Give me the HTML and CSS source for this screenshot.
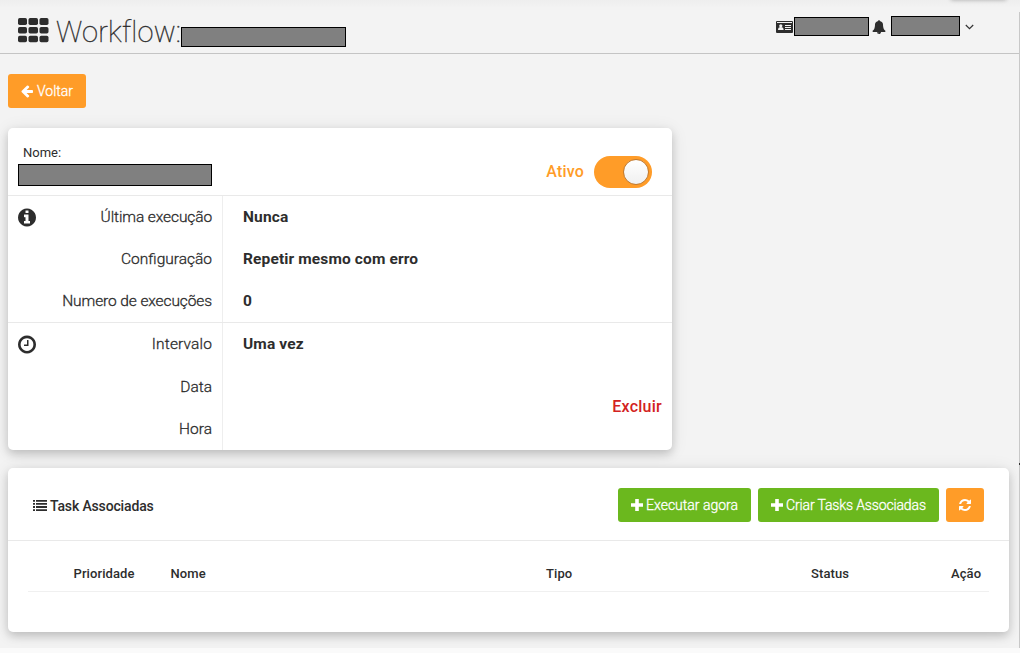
FILE: index.html
```html
<!DOCTYPE html>
<html lang="pt-BR">
<head>
<meta charset="utf-8">
<title>Workflow</title>
<link rel="stylesheet" href="styles.css">
</head>
<body>
<div class="page">
  <header class="topbar">
    <svg class="grid-icon" width="31" height="25" viewBox="0 0 31 25"><g fill="#2d2d2d"><rect y="0" width="9" height="7" rx="1.7"/><rect x="10.5" y="0" width="9.5" height="7" rx="1.7"/><rect x="21.5" y="0" width="9" height="7" rx="1.7"/><rect y="9" width="9" height="6.5" rx="1.7"/><rect x="10.5" y="9" width="9.5" height="6.5" rx="1.7"/><rect x="21.5" y="9" width="9" height="6.5" rx="1.7"/><rect y="17.7" width="9" height="6.5" rx="1.7"/><rect x="10.5" y="17.7" width="9.5" height="6.5" rx="1.7"/><rect x="21.5" y="17.7" width="9" height="6.5" rx="1.7"/></g></svg>
    <h1 class="title"><span class="title-text">Workflow:</span></h1>
    <span class="mask mask-title"></span>
    <div class="user">
      <svg class="card-icon" width="17" height="12" viewBox="0 0 17 12"><rect width="17" height="12" rx="1" fill="#2d2d2d"/><path d="M1 1.5h15M9 4.5h6M9 6.5h6M9 8.5h6" stroke="#f2f2f2" stroke-width="1"/><circle cx="4.8" cy="4.8" r="1.6" fill="#f2f2f2"/><path d="M2 9q0-3 2.8-3t2.8 3z" fill="#f2f2f2"/></svg>
      <span class="mask mask-account"></span>
      <svg class="bell-icon" width="14" height="14" viewBox="0 0 1792 1792"><path fill="#2d2d2d" d="M912 1696q0-16-16-16-59 0-101.5-42.5t-42.5-101.5q0-16-16-16t-16 16q0 73 51.5 124.5t124.5 51.5q16 0 16-16zm816-288q0 52-38 90t-90 38h-448q0 106-75 181t-181 75-181-75-75-181h-448q-52 0-90-38t-38-90q50-42 91-88t85-119.5 74.5-158.5 50-206 19.5-260q0-152 117-282.5t307-158.5q-8-19-8-39 0-40 28-68t68-28 68 28 28 68q0 20-8 39 190 28 307 158.5t117 282.5q0 139 19.5 260t50 206 74.5 158.5 85 119.5 91 88z"/></svg>
      <span class="mask mask-user"></span>
      <svg class="chevron" width="9" height="6" viewBox="0 0 9 6"><path d="M.8 1l3.7 3.7L8.200 1" fill="none" stroke="#333" stroke-width="1.2"/></svg>
    </div>
  </header>
  <main class="content">
    <button class="btn orange back"><svg width="14" height="14" viewBox="0 0 1792 1792"><path fill="#fff" d="M1664 896v128q0 53-32.500 90.500t-84.500 37.500h-704l293 294q38 36 38 90t-38 90l-75 76q-37 37-90 37-52 0-91-37l-651-652q-37-37-37-90 0-52 37-91l651-650q38-38 91-38 52 0 90 38l75 74q38 38 38 91t-38 91l-293 293h704q52 0 84.500 37.500t32.500 90.500z"/></svg><span class="back-text">Voltar</span></button>

    <section class="card details">
      <div class="name-row">
        <div class="name-block">
          <span class="name-label">Nome:</span>
          <span class="mask mask-name"></span>
        </div>
        <div class="state"><span class="state-text">Ativo</span><span class="switch"><span class="knob"></span></span></div>
      </div>
      <div class="group">
        <svg class="group-icon" width="21" height="21" viewBox="128 128 1536 1536"><path fill="#2d2d2d" d="M1152 1376v-160q0-14-9-23t-23-9h-96v-512q0-14-9-23t-23-9h-320q-14 0-23 9t-9 23v160q0 14 9 23t23 9h96v320h-96q-14 0-23 9t-9 23v160q0 14 9 23t23 9h448q14 0 23-9t9-23zm-128-896v-160q0-14-9-23t-23-9h-192q-14 0-23 9t-9 23v160q0 14 9 23t23 9h192q14 0 23-9t9-23zm640 416q0 209-103 385.500t-279.500 279.500-385.500 103-385.500-103-279.500-279.500-103-385.500 103-385.500 279.500-279.500 385.500-103 385.500 103 279.500 279.500 103 385.500z"/></svg>
        <div class="labels"><span class="l1">Última execução</span><span class="l2">Configuração</span><span class="l3">Numero de execuções</span></div>
        <div class="values"><span class="v1">Nunca</span><span class="v2">Repetir mesmo com erro</span><span class="v3">0</span></div>
      </div>
      <div class="group schedule">
        <svg class="group-icon" width="19" height="19" viewBox="128 128 1536 1536"><path fill="#2d2d2d" d="M1024 544v448q0 14-9 23t-23 9h-320q-14 0-23-9t-9-23v-64q0-14 9-23t23-9h224v-352q0-14 9-23t23-9h64q14 0 23 9t9 23zm416 352q0-148-73-273t-198-198-273-73-273 73-198 198-73 273 73 273 198 198 273 73 273-73 198-198 73-273zm224 0q0 209-103 385.500t-279.500 279.500-385.500 103-385.500-103-279.500-279.500-103-385.500 103-385.500 279.500-279.500 385.500-103 385.500 103 279.500 279.500 103 385.500z"/></svg>
        <div class="labels"><span class="l4">Intervalo</span><span class="l5">Data</span><span class="l6">Hora</span></div>
        <div class="values"><span class="v4">Uma vez</span></div>
        <a class="remove">Excluir</a>
      </div>
    </section>

    <section class="card tasks">
      <div class="tasks-head">
        <svg class="list-icon" width="14" height="11" viewBox="0 0 14 11"><path d="M0 .8h2M3 .8h11M0 3.900h2M3 3.900h11M0 7h2M3 7h11M0 10.100h2M3 10.100h11" stroke="#2d2d2d" stroke-width="1.900"/></svg>
        <h2 class="tasks-title">Task Associadas</h2>
        <div class="actions">
          <button class="btn green run"><svg width="12" height="12" viewBox="0 0 12 12"><path d="M4.200 0h3.600v4.200H12v3.600H7.800V12H4.200V7.800H0V4.200h4.200z" fill="#fff"/></svg><span class="run-text">Executar agora</span></button>
          <button class="btn green create"><svg width="12" height="12" viewBox="0 0 12 12"><path d="M4.200 0h3.600v4.200H12v3.600H7.800V12H4.200V7.800H0V4.200h4.200z" fill="#fff"/></svg><span class="create-text">Criar Tasks Associadas</span></button>
          <button class="btn orange refresh"><svg width="14" height="14" viewBox="0 0 1792 1792"><path fill="#fff" d="M1639 1056q0 5-1 7-64 268-268 434.500t-478 166.500q-146 0-282.500-55t-243.500-157l-129 129q-19 19-45 19t-45-19-19-45v-448q0-26 19-45t45-19h448q26 0 45 19t19 45-19 45l-137 137q71 66 161 102t187 36q134 0 250-65t186-179q11-17 53-117 8-23 30-23h192q13 0 22.500 9.500t9.500 22.500zm25-800v448q0 26-19 45t-45 19h-448q-26 0-45-19t-19-45 19-45l138-138q-148-137-349-137-134 0-250 65t-186 179q-11 17-53 117-8 23-30 23h-199q-13 0-22.500-9.500t-9.500-22.500v-7q65-268 270-434.500t480-166.500q146 0 284 55.500t245 156.500l130-129q19-19 45-19t45 19 19 45z"/></svg></button>
        </div>
      </div>
      <div class="columns"><span class="c1">Prioridade</span><span class="c2">Nome</span><span class="c3">Tipo</span><span class="c4">Status</span><span class="c5">Ação</span></div>
    </section>
  </main>
</div>
</body>
</html>
```

FILE: styles.css
```css
* { box-sizing: border-box; }
body { margin: 0; background: #fafafa; font-family: Roboto, "Liberation Sans", sans-serif; color: #2d2d2d; overflow: hidden; }
span, h1, h2, a { white-space: nowrap; }
svg { display: block; flex: none; }
.page { height: 648px; background: linear-gradient(#eeeeee, #f3f3f3 8px); overflow: hidden; position: relative; }
.page::before { content: ""; position: absolute; right: 14px; top: -10px; width: 55px; height: 10px; box-shadow: 0 0 4px rgba(0,0,0,.3); }
.page::after { content: ""; position: absolute; right: 0; top: 12px; bottom: 0; width: 1px; background: linear-gradient(#c8c8c8 451px, #333 451px 453px, #c8c8c8 453px); }
.topbar { height: 54px; border-bottom: 1px solid #c4c4c4; display: flex; align-items: flex-start; padding-left: 18px; }
.grid-icon { margin-top: 18px; }
.title { margin: 14px 0 0 7px; width: 125px; font-size: 29px; line-height: 36px; font-weight: 100; letter-spacing: .2px; -webkit-text-stroke: .35px #2d2d2d; }
.mask { display: block; flex: none; background: #808080; border: 1px solid #000; }
.mask-title { width: 165px; height: 20px; margin-top: 27px; }
.user { margin-left: 430px; display: flex; align-items: flex-start; }
.card-icon { margin-top: 21px; }
.mask-account { width: 75px; height: 19px; margin: 17px 3px 0 1px; }
.bell-icon { margin-top: 20px; }
.mask-user { width: 69px; height: 20px; margin: 16px 5px 0; }
.chevron { margin-top: 24px; }
.content { padding: 20px 8px 0; }
.btn { display: flex; align-items: center; height: 34px; border: 0; border-radius: 3px; padding: 0 0 0 12px; font: 400 14px/34px Roboto, sans-serif; color: #fff; }
.btn span { font-weight: 300; -webkit-text-stroke: .3px #fff; }
.orange { background: #ff9c28; }
.green { background: #6bb81e; }
.back { width: 78px; gap: 3px; }
.card { background: #fff; border-radius: 5px; box-shadow: 0 4px 8px rgba(0,0,0,.17), 0 2px 18px rgba(0,0,0,.09); }
.details { width: 664px; height: 322px; margin-top: 20px; }
.name-row { height: 68px; border-bottom: 1px solid #e9e9e9; display: flex; justify-content: space-between; padding: 17px 20px 0 10px; }
.name-label { display: block; height: 19px; padding-left: 5px; font-size: 13px; line-height: 16px; }
.mask-name { width: 194px; height: 22px; }
.state { display: flex; gap: 10px; height: 32px; margin-top: 11px; line-height: 32px; font-size: 16px; font-weight: 500; color: #ff9c28; }
.state-text { letter-spacing: .2px; }
.switch { width: 58px; height: 32px; border-radius: 16px; background: #ff9c28; padding: 3px 3px 3px 29px; }
.knob { display: block; width: 26px; height: 26px; border-radius: 50%; border: 1px solid #bf7930; background: linear-gradient(#fff, #f0f0f0); }
.group { height: 127px; display: flex; position: relative; }
.group + .group { border-top: 1px solid #e9e9e9; height: 128px; margin-top: -1px; }
.group-icon { position: absolute; left: 10px; top: 12px; width: 18px; height: 19px; }
.labels { width: 215px; border-right: 1px solid #eee; padding: 0 10px 0 0; text-align: right; font-size: 15.500px; font-weight: 300; -webkit-text-stroke: .3px #2d2d2d; }
.labels span, .values span { display: block; line-height: 42px; height: 42px; }
.schedule .l4 { height: 43px; letter-spacing: .15px; }
.l1, .l3 { letter-spacing: -.1px; }
.values { padding: 0 0 0 20px; font-size: 15.500px; font-weight: 700; letter-spacing: .13px; }
.remove { position: absolute; right: 10px; top: 72px; font-size: 16px; line-height: 24px; font-weight: 500; letter-spacing: .25px; color: #d32222; }
.tasks { width: 1001px; height: 164px; margin-top: 18px; }
.tasks-head { height: 73px; border-bottom: 1px solid #e9e9e9; display: flex; align-items: center; padding: 1px 25px 0; }
.list-icon { margin-top: 1px; }
.tasks-title { margin: 3px 0 0 3px; font-size: 14px; font-weight: 500; letter-spacing: -.15px; }
.actions { margin-left: auto; display: flex; gap: 7px; }
.run { width: 133px; gap: 3px; padding-left: 13px; }
.create { width: 181px; gap: 3px; padding-left: 13px; }
.create-text { letter-spacing: -.14px; }
.refresh { width: 38px; padding-left: 12px; }
.columns { display: grid; grid-template-columns: 97px 375.500px 265px 140px auto; margin: 0 20px; height: 51px; padding: 18px 0 0 45.500px; border-bottom: 1px solid #f0f0f0; font-size: 13px; line-height: 30px; font-weight: 500; letter-spacing: .1px; }
```
